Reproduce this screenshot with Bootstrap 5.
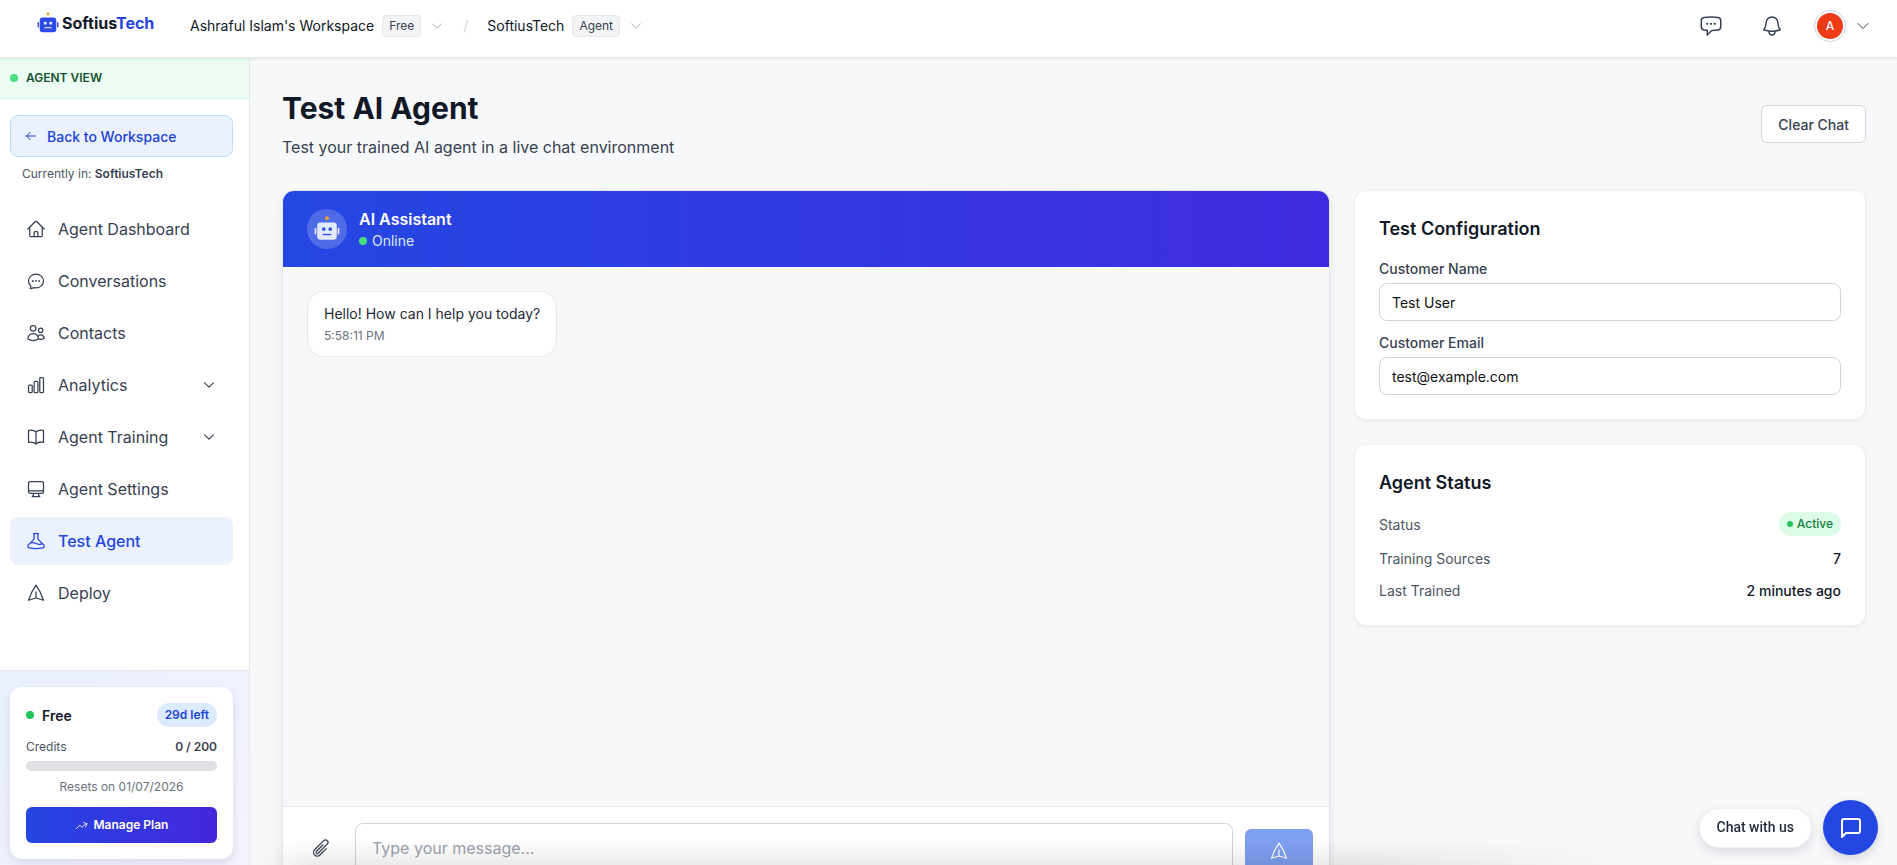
<!DOCTYPE html>
<html lang="en">
<head>
  <meta charset="utf-8" />
  <meta name="viewport" content="width=device-width, initial-scale=1" />
  <title>Test AI Agent – SoftiusTech</title>
  <link href="https://cdn.jsdelivr.net/npm/bootstrap@5.3.2/dist/css/bootstrap.min.css" rel="stylesheet" />
  <style>
    html, body { height: 100%; }
    body {
      font-family: Inter, "Liberation Sans", sans-serif;
      background-color: #f7f8fa;
      color: #111827;
      overflow: hidden;
    }
    .ico { fill: none; stroke: currentColor; stroke-width: 1.5; stroke-linecap: round; stroke-linejoin: round; flex-shrink: 0; overflow: visible; }
    .ico-bold { stroke-width: 2; }

    /* header */
    .topbar { height: 58px; background: #fff; border-bottom: 1px solid #e5e7eb; box-shadow: 0 1px 3px rgba(0,0,0,.08); position: relative; z-index: 2; padding: 0 26px 6px 37px; }
    .brand { font-size: 16px; font-weight: 700; width: 153px; color: #111827; gap: 3px; margin-bottom: 5px; }
    .brand-ico { color: #2d4be6; --eye: #dfe6fd; }
    .brand-tech { color: #2546e3; }
    .crumb { font-size: 14px; font-weight: 400; color: #111827; }
    .plan-tag { font-size: 12px; font-weight: 400; color: #374151; background: #f3f4f6; border: 1px solid #e5e7eb; border-radius: 4px; padding: 1px 6px; line-height: 18px; margin-left: 8px; }
    .crumb-caret { color: #9ca3af; margin-left: 9px; }
    .crumb-sep { color: #d1d5db; margin: 0 19px 0 19px; font-size: 14px; }
    .top-ico { color: #374151; }
    .bell-ico { margin-left: 37px; }
    .avatar-ring { width: 32px; height: 32px; border: 1px solid #d1d5db; border-radius: 50%; padding: 2px; margin-left: 30px; }
    .avatar-in { width: 100%; height: 100%; border-radius: 50%; background: #ee3a16; color: #fff; font-size: 12px; font-weight: 500; }
    .avatar-caret { margin-left: 9px; }

    /* sidebar */
    .side { width: 250px; background: #fff; border-right: 1px solid #e5e7eb; flex-shrink: 0; }
    .view-band { height: 41px; background: #ecfdf3; border-bottom: 1px solid #d6f5e2; padding-left: 10px; font-size: 12px; font-weight: 600; color: #14532d; gap: 8px; }
    .dot-green { width: 8px; height: 8px; border-radius: 50%; background: #4ade80; flex-shrink: 0; }
    .back-btn { margin: 16px 16px 0 10px; height: 42px; width: 223px; background: #ebf2fe; border: 1px solid #bfdbfe; border-radius: 8px; color: #1d43d8; font-size: 14px; font-weight: 500; padding-left: 14px; gap: 10px; }
    .current-in { font-size: 12px; color: #4b5563; margin: 9px 0 0 22px; line-height: 16px; }
    .current-in b { font-weight: 600; color: #374151; }
    .side-nav { margin-top: 23px; padding: 0 16px 0 10px; gap: 4px; }
    .side-link { height: 48px; border-radius: 8px; padding: 0 17px 0 16px; font-size: 16px; color: #374151; gap: 12px; text-decoration: none; }
    .side-link.active { background: #ebf2fe; color: #2546e3; font-weight: 500; }
    .side-foot { height: 195px; border-top: 1px solid #e5e7eb; background: linear-gradient(135deg, #e9f0fe, #f4f2fe); padding: 16px 16px 0 10px; }
    .plan-box { background: #fff; border-radius: 12px; box-shadow: 0 4px 8px rgba(17,24,39,.1); padding: 16px; height: 172px; }
    .plan-name { font-size: 14px; font-weight: 600; gap: 8px; }
    .plan-name .dot-green { background: #22c55e; }
    .days-tag { background: #dbeafe; color: #1d43d8; font-size: 12px; font-weight: 600; border-radius: 12px; height: 24px; padding: 0 8px; }
    .credit-line { font-size: 12px; color: #4b5563; margin-top: 12px; line-height: 16px; }
    .credit-line b { font-weight: 600; color: #374151; }
    .credit-bar { height: 10px; background: #dfe1e5; border-radius: 5px; margin-top: 6px; }
    .resets { font-size: 12px; color: #6b7280; text-align: center; margin-top: 8px; line-height: 16px; }
    .manage-btn { height: 36px; margin-top: 12px; border: 0; border-radius: 6px; width: 100%; background: linear-gradient(90deg, #2546e3, #4426dc); color: #fff; font-size: 12px; font-weight: 600; gap: 6px; }

    /* main */
    .page-main { padding: 24px 31px 0 32px; min-width: 0; }
    .page-title { font-size: 30px; font-weight: 700; line-height: 36px; margin: 8px 0 0; color: #111827; }
    .page-sub { font-size: 16px; color: #374151; margin: 9px 0 0; line-height: 24px; }
    .clear-btn { height: 38px; background: #fff; border: 1px solid #d1d5db; border-radius: 6px; font-size: 14px; font-weight: 500; color: #374151; padding: 0 16px; margin-top: 23px; }
    .head-row { height: 108px; }

    .chat-card { border: 1px solid #e5e7eb; border-radius: 12px 12px 0 0; overflow: hidden; box-shadow: 0 4px 10px rgba(17,24,39,.08); background: #fff; }
    .chat-head { height: 76px; background: linear-gradient(90deg, #2447e3, #3f2bdf); color: #fff; padding: 0 24px; gap: 12px; }
    .bot-circle { width: 40px; height: 40px; border-radius: 50%; background: rgba(255,255,255,.2); }
    .bot-ico { color: #e4eafd; --eye: #2f50e4; }
    .bot-name { font-size: 16px; font-weight: 600; line-height: 24px; }
    .bot-status { font-size: 14px; color: #dbeafe; line-height: 20px; gap: 5px; }
    .chat-msgs { height: 540px; background: #f7f8fa; border-bottom: 1px solid #e5e7eb; padding: 24px; }
    .bubble { width: 250px; height: 66px; background: #fff; border: 1px solid #e5e7eb; border-radius: 16px; padding: 12px 16px; }
    .bubble-text { font-size: 14px; line-height: 20px; color: #1f2937; white-space: nowrap; }
    .bubble-time { font-size: 12px; line-height: 16px; color: #6b7280; margin-top: 4px; }
    .chat-input { padding: 16px; gap: 12px; background: #fff; }
    .clip-btn { width: 44px; height: 44px; color: #374151; margin-bottom: 3px; }
    .msg-field { flex: 1; height: 50px; border: 1px solid #d1d5db; border-radius: 8px; font-size: 16px; padding: 0 16px; min-width: 0; }
    .msg-field::placeholder { color: #9ca3af; }
    .send-btn { width: 68px; height: 44px; border: 0; border-radius: 6px; background: #7f9ff0; color: #fff; }

    .side-card { background: #fff; border: 1px solid #f1f2f4; border-radius: 12px; box-shadow: 0 1px 3px rgba(17,24,39,.07); padding: 24px; }
    .config-box { height: 230px; }
    .config-box h3 { margin-bottom: 16px; }
    .status-box { height: 182px; margin-top: 24px; }
    .side-card h3 { font-size: 18px; font-weight: 600; line-height: 28px; margin-top: 0; color: #111827; }
    .status-box h3 { margin-bottom: 15px; }
    .cfg-label { font-size: 14px; font-weight: 500; color: #374151; line-height: 20px; display: block; margin-bottom: 4px; }
    .cfg-input { height: 38px; font-size: 14px; color: #111; border: 1px solid #d1d5db; border-radius: 8px; padding: 0 12px; width: 100%; display: block; margin-bottom: 12px; }
    .stat-row { font-size: 14px; color: #4b5563; margin-bottom: 11px; }
    .stat-row.stat-first { margin-bottom: 12px; }
    .stat-val { font-weight: 500; color: #111827; }
    .active-tag { height: 24px; background: #dcfce7; color: #15803d; border-radius: 12px; padding: 0 8px; font-size: 12px; font-weight: 500; gap: 4px; }
    .dot-small { width: 6px; height: 6px; border-radius: 50%; background: #22c55e; }

    /* floating chat widget */
    .bottom-fade {
      position: fixed; left: 260px; right: 270px; bottom: 0; height: 26px; z-index: 4; pointer-events: none;
      background: linear-gradient(180deg, rgba(0,0,0,0), rgba(0,0,0,.08));
      -webkit-mask-image: linear-gradient(90deg, transparent, #000 4%, #000 80%, transparent);
      mask-image: linear-gradient(90deg, transparent, #000 4%, #000 80%, transparent);
    }
    .widget { position: fixed; right: 19px; bottom: 10px; gap: 11px; z-index: 5; }
    .widget-label { height: 40px; padding: 0 17px; background: #fff; border: 1px solid #eceef1; border-radius: 20px; font-family: Roboto, sans-serif; font-size: 14px; font-weight: 500; color: #1f2937; box-shadow: 0 4px 10px rgba(17,24,39,.12); }
    .widget-btn { width: 55px; height: 55px; border: 0; border-radius: 50%; background: #2447e3; color: #fff; box-shadow: 0 4px 10px rgba(17,24,39,.15); }
  </style>
</head>
<body class="d-flex flex-column">
  <svg width="0" height="0" class="position-absolute">
    <symbol id="i-home" viewBox="0 0 24 24"><path d="M2.25 12l8.954-8.955c.44-.439 1.152-.439 1.591 0L21.75 12M4.5 9.75v10.125c0 .621.504 1.125 1.125 1.125H9.75v-4.875c0-.621.504-1.125 1.125-1.125h2.25c.621 0 1.125.504 1.125 1.125V21h4.125c.621 0 1.125-.504 1.125-1.125V9.75M8.25 21h8.25"/></symbol>
    <symbol id="i-oval" viewBox="0 0 24 24"><path d="M8.625 12a.375.375 0 11-.75 0 .375.375 0 01.75 0zm0 0H8.25m4.125 0a.375.375 0 11-.75 0 .375.375 0 01.75 0zm0 0H12m4.125 0a.375.375 0 11-.75 0 .375.375 0 01.75 0zm0 0h-.375M21 12c0 4.556-4.03 8.25-9 8.25a9.764 9.764 0 01-2.555-.337A5.972 5.972 0 015.41 20.97a5.969 5.969 0 01-.474-.065 4.48 4.48 0 00.978-2.025c.09-.457-.133-.901-.467-1.226C3.93 16.178 3 14.189 3 12c0-4.556 4.03-8.25 9-8.25s9 3.694 9 8.25z"/></symbol>
    <symbol id="i-users" viewBox="0 0 24 24"><path d="M15 19.128a9.38 9.38 0 002.625.372 9.337 9.337 0 004.121-.952 4.125 4.125 0 00-7.533-2.493M15 19.128v-.003c0-1.113-.285-2.16-.786-3.07M15 19.128v.106A12.318 12.318 0 018.624 21c-2.331 0-4.512-.645-6.374-1.766l-.001-.109a6.375 6.375 0 0111.964-3.07M12 6.375a3.375 3.375 0 11-6.75 0 3.375 3.375 0 016.75 0zm8.25 2.25a2.625 2.625 0 11-5.25 0 2.625 2.625 0 015.25 0z"/></symbol>
    <symbol id="i-chart" viewBox="0 0 24 24"><path d="M3 13.125C3 12.504 3.504 12 4.125 12h2.25c.621 0 1.125.504 1.125 1.125v6.75C7.5 20.496 6.996 21 6.375 21h-2.25A1.125 1.125 0 013 19.875v-6.75zM9.75 8.625c0-.621.504-1.125 1.125-1.125h2.25c.621 0 1.125.504 1.125 1.125v11.25c0 .621-.504 1.125-1.125 1.125h-2.25a1.125 1.125 0 01-1.125-1.125V8.625zM16.5 4.125c0-.621.504-1.125 1.125-1.125h2.25C20.496 3 21 3.504 21 4.125v15.75c0 .621-.504 1.125-1.125 1.125h-2.25a1.125 1.125 0 01-1.125-1.125V4.125z"/></symbol>
    <symbol id="i-book" viewBox="0 0 24 24"><path d="M12 6.042A8.967 8.967 0 006 3.75c-1.052 0-2.062.18-3 .512v14.25A8.987 8.987 0 016 18c2.305 0 4.408.867 6 2.292m0-14.25a8.966 8.966 0 016-2.292c1.052 0 2.062.18 3 .512v14.25A8.987 8.987 0 0018 18a8.967 8.967 0 00-6 2.292m0-14.25v14.25"/></symbol>
    <symbol id="i-desktop" viewBox="0 0 24 24"><path d="M9 17.25v1.007a3 3 0 01-.879 2.122L7.5 21h9l-.621-.621A3 3 0 0115 18.257V17.25m6-12V15a2.25 2.25 0 01-2.25 2.25H5.25A2.25 2.25 0 013 15V5.25m18 0A2.25 2.25 0 0018.75 3H5.25A2.25 2.25 0 003 5.25m18 0V12a2.25 2.25 0 01-2.25 2.25H5.25A2.25 2.25 0 013 12V5.25"/></symbol>
    <symbol id="i-flask" viewBox="0 0 24 24"><path d="M9.75 3.104v5.714a2.25 2.25 0 01-.659 1.591L5 14.5M9.75 3.104c-.251.023-.501.05-.75.082m.75-.082a24.301 24.301 0 014.5 0m0 0v5.714c0 .597.237 1.17.659 1.591L19.8 15.3M14.25 3.104c.251.023.501.05.75.082M19.8 15.3l-1.57.393A9.065 9.065 0 0112 15a9.065 9.065 0 00-6.23-.693L5 14.5m14.8.8l1.402 1.402c1.232 1.232.65 3.318-1.067 3.611A48.309 48.309 0 0112 21c-2.773 0-5.491-.235-8.135-.687-1.718-.293-2.3-2.379-1.067-3.61L5 14.5"/></symbol>
    <symbol id="i-plane" viewBox="0 0 24 24"><path transform="rotate(-90 12 12)" d="M6 12L3.269 3.126A59.768 59.768 0 0121.485 12 59.77 59.77 0 013.27 20.876L5.999 12zm0 0h7.5"/></symbol>
    <symbol id="i-down" viewBox="0 0 24 24"><path d="M19.5 8.25l-7.5 7.5-7.5-7.5"/></symbol>
    <symbol id="i-left" viewBox="0 0 24 24"><path d="M10.5 19.5L3 12m0 0l7.5-7.5M3 12h18"/></symbol>
    <symbol id="i-trend" viewBox="0 0 24 24"><path d="M2.25 18L9 11.25l4.306 4.307a11.95 11.95 0 015.814-5.519l2.74-1.22m0 0l-5.94-2.28m5.94 2.28l-2.28 5.941"/></symbol>
    <symbol id="i-bell" viewBox="0 0 24 24"><path d="M14.857 17.082a23.848 23.848 0 005.454-1.31A8.967 8.967 0 0118 9.75v-.7V9A6 6 0 006 9v.75a8.967 8.967 0 01-2.312 6.022c1.733.64 3.56 1.085 5.455 1.31m5.714 0a24.255 24.255 0 01-5.714 0m5.714 0a3 3 0 11-5.714 0"/></symbol>
    <symbol id="i-msg" viewBox="0 0 24 24"><path d="M8.625 9.75a.375.375 0 11-.75 0 .375.375 0 01.75 0zm0 0H8.25m4.125 0a.375.375 0 11-.75 0 .375.375 0 01.75 0zm0 0H12m4.125 0a.375.375 0 11-.75 0 .375.375 0 01.75 0zm0 0h-.375m-13.5 3.01c0 1.6 1.123 2.994 2.707 3.227 1.087.16 2.185.283 3.293.369V21l4.184-4.183a1.14 1.14 0 01.778-.332 48.294 48.294 0 005.83-.498c1.585-.233 2.708-1.626 2.708-3.228V6.741c0-1.602-1.123-2.995-2.707-3.228A48.394 48.394 0 0012 3c-2.392 0-4.744.175-7.043.513C3.373 3.746 2.25 5.14 2.25 6.741v6.018z"/></symbol>
    <symbol id="i-clip" viewBox="0 0 24 24"><path d="M18.375 12.739l-7.693 7.693a4.5 4.5 0 01-6.364-6.364l10.94-10.94A3 3 0 1119.5 7.372L8.552 18.32m.009-.01l-.01.01m5.699-9.941l-7.81 7.81a1.5 1.5 0 002.112 2.13"/></symbol>
    <symbol id="i-bubble" viewBox="0 0 24 24"><path d="M21 15a2 2 0 0 1-2 2H7l-4 4V5a2 2 0 0 1 2-2h14a2 2 0 0 1 2 2z"/></symbol>
    <symbol id="i-bot" viewBox="0 0 24 24">
      <rect x="3" y="6" width="18" height="16" rx="3" fill="currentColor" stroke="none"/>
      <rect x="0.6" y="11" width="1.6" height="6" rx=".8" fill="currentColor" stroke="none"/>
      <rect x="21.8" y="11" width="1.6" height="6" rx=".8" fill="currentColor" stroke="none"/>
      <rect x="7.5" y="10.5" width="3" height="3" rx=".5" fill="var(--eye)" stroke="none"/>
      <rect x="13.5" y="10.5" width="3" height="3" rx=".5" fill="var(--eye)" stroke="none"/>
      <rect x="8" y="16.5" width="8" height="1.2" fill="var(--eye)" stroke="none"/>
      <circle cx="12" cy="2" r="1.7" fill="#f5a524" stroke="none"/>
    </symbol>
  </svg>

  <!-- barra superior -->
  <header class="topbar d-flex align-items-center flex-shrink-0">
    <div class="brand d-flex align-items-center">
      <svg class="ico brand-ico" width="22" height="22"><use href="#i-bot"/></svg>
      <span>Softius<span class="brand-tech">Tech</span></span>
    </div>
    <div class="d-flex align-items-center crumb">
      <span>Ashraful Islam's Workspace</span>
      <span class="plan-tag">Free</span>
      <svg class="ico crumb-caret" width="14" height="14"><use href="#i-down"/></svg>
      <span class="crumb-sep">/</span>
      <span>SoftiusTech</span>
      <span class="plan-tag">Agent</span>
      <svg class="ico crumb-caret" width="14" height="14"><use href="#i-down"/></svg>
    </div>
    <div class="ms-auto d-flex align-items-center top-ico">
      <svg class="ico" width="24" height="24"><use href="#i-msg"/></svg>
      <svg class="ico bell-ico" width="24" height="24"><use href="#i-bell"/></svg>
      <div class="avatar-ring"><div class="avatar-in d-flex align-items-center justify-content-center">A</div></div>
      <svg class="ico avatar-caret" width="16" height="16"><use href="#i-down"/></svg>
    </div>
  </header>

  <div class="d-flex flex-grow-1 overflow-hidden">
    <!-- menu lateral -->
    <aside class="side d-flex flex-column">
      <div class="view-band d-flex align-items-center flex-shrink-0"><span class="dot-green"></span>AGENT VIEW</div>
      <a class="back-btn d-flex align-items-center text-decoration-none flex-shrink-0" href="#">
        <svg class="ico ico-bold" width="12" height="12"><use href="#i-left"/></svg>Back to Workspace
      </a>
      <div class="current-in">Currently in: <b>SoftiusTech</b></div>
      <nav class="side-nav d-flex flex-column">
        <a class="side-link d-flex align-items-center" href="#"><svg class="ico" width="20" height="20"><use href="#i-home"/></svg>Agent Dashboard</a>
        <a class="side-link d-flex align-items-center" href="#"><svg class="ico" width="20" height="20"><use href="#i-oval"/></svg>Conversations</a>
        <a class="side-link d-flex align-items-center" href="#"><svg class="ico" width="20" height="20"><use href="#i-users"/></svg>Contacts</a>
        <a class="side-link d-flex align-items-center" href="#"><svg class="ico" width="20" height="20"><use href="#i-chart"/></svg>Analytics<svg class="ico ico-bold ms-auto" width="14" height="14"><use href="#i-down"/></svg></a>
        <a class="side-link d-flex align-items-center" href="#"><svg class="ico" width="20" height="20"><use href="#i-book"/></svg>Agent Training<svg class="ico ico-bold ms-auto" width="14" height="14"><use href="#i-down"/></svg></a>
        <a class="side-link d-flex align-items-center" href="#"><svg class="ico" width="20" height="20"><use href="#i-desktop"/></svg>Agent Settings</a>
        <a class="side-link active d-flex align-items-center" href="#"><svg class="ico" width="20" height="20"><use href="#i-flask"/></svg>Test Agent</a>
        <a class="side-link d-flex align-items-center" href="#"><svg class="ico" width="20" height="20"><use href="#i-plane"/></svg>Deploy</a>
      </nav>
      <div class="side-foot mt-auto flex-shrink-0">
        <div class="plan-box">
          <div class="d-flex justify-content-between align-items-center">
            <div class="plan-name d-flex align-items-center"><span class="dot-green"></span>Free</div>
            <span class="days-tag d-flex align-items-center">29d left</span>
          </div>
          <div class="credit-line d-flex justify-content-between"><span>Credits</span><b>0 / 200</b></div>
          <div class="credit-bar"></div>
          <div class="resets">Resets on 01/07/2026</div>
          <button class="manage-btn d-flex align-items-center justify-content-center" type="button">
            <svg class="ico" width="13" height="13"><use href="#i-trend"/></svg>Manage Plan
          </button>
        </div>
      </div>
    </aside>

    <!-- contenido -->
    <main class="page-main flex-grow-1">
      <div class="head-row d-flex justify-content-between align-items-start">
        <div>
          <h1 class="page-title">Test AI Agent</h1>
          <p class="page-sub">Test your trained AI agent in a live chat environment</p>
        </div>
        <button class="clear-btn" type="button">Clear Chat</button>
      </div>

      <div class="row gx-4">
        <div class="col-8">
          <div class="chat-card">
            <div class="chat-head d-flex align-items-center">
              <div class="bot-circle d-flex align-items-center justify-content-center">
                <svg class="ico bot-ico" width="26" height="26"><use href="#i-bot"/></svg>
              </div>
              <div>
                <div class="bot-name">AI Assistant</div>
                <div class="bot-status d-flex align-items-center"><span class="dot-green"></span>Online</div>
              </div>
            </div>
            <div class="chat-msgs">
              <div class="bubble">
                <div class="bubble-text">Hello! How can I help you today?</div>
                <div class="bubble-time">5:58:11 PM</div>
              </div>
            </div>
            <div class="chat-input d-flex align-items-end">
              <div class="clip-btn d-flex align-items-center justify-content-center"><svg class="ico" width="20" height="20"><use href="#i-clip"/></svg></div>
              <input class="msg-field" type="text" placeholder="Type your message..." />
              <button class="send-btn d-flex align-items-center justify-content-center" type="button"><svg class="ico" width="20" height="20"><use href="#i-plane"/></svg></button>
            </div>
          </div>
        </div>
        <div class="col-4 d-flex flex-column align-items-stretch">
          <div class="side-card config-box">
            <h3>Test Configuration</h3>
            <label class="cfg-label">Customer Name</label>
            <input class="cfg-input" type="text" value="Test User" />
            <label class="cfg-label">Customer Email</label>
            <input class="cfg-input" type="text" value="test@example.com" />
          </div>
          <div class="side-card status-box">
            <h3>Agent Status</h3>
            <div class="stat-row stat-first d-flex justify-content-between align-items-center">
              <span>Status</span>
              <span class="active-tag d-flex align-items-center"><span class="dot-small"></span>Active</span>
            </div>
            <div class="stat-row d-flex justify-content-between align-items-center">
              <span>Training Sources</span><span class="stat-val">7</span>
            </div>
            <div class="stat-row d-flex justify-content-between align-items-center">
              <span>Last Trained</span><span class="stat-val">2 minutes ago</span>
            </div>
          </div>
        </div>
      </div>
    </main>
  </div>

  <div class="bottom-fade"></div>

  <!-- widget de chat -->
  <div class="widget d-flex align-items-center">
    <div class="widget-label d-flex align-items-center">Chat with us</div>
    <button class="widget-btn d-flex align-items-center justify-content-center" type="button">
      <svg class="ico ico-bold" width="24" height="24"><use href="#i-bubble"/></svg>
    </button>
  </div>

  <script src="https://cdn.jsdelivr.net/npm/bootstrap@5.3.2/dist/js/bootstrap.bundle.min.js"></script>
</body>
</html>
